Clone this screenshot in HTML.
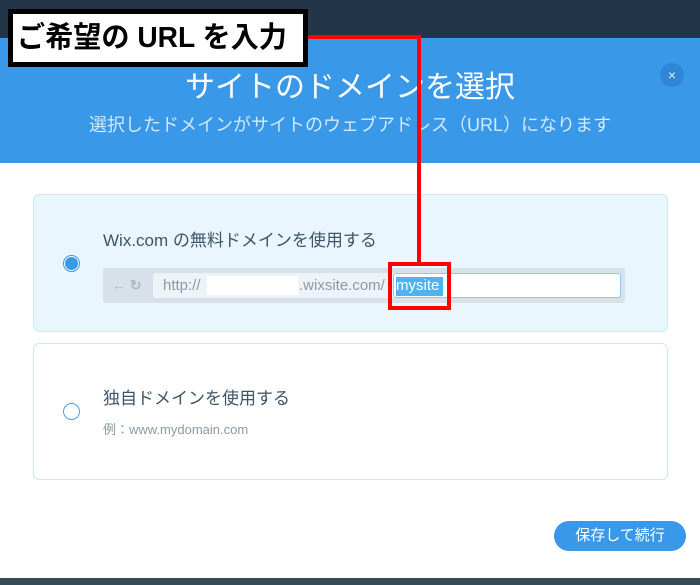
<!DOCTYPE html>
<html><head><meta charset="utf-8"><style>
*{margin:0;padding:0;box-sizing:border-box}
body{width:700px;height:585px;position:relative;overflow:hidden;background:#fff;font-family:"Liberation Sans","Noto Sans CJK JP",sans-serif}
.a{position:absolute}
</style></head><body>
<div class="a" style="left:0;top:0;width:700px;height:38px;background:#233549"></div>
<div class="a" style="left:0;top:38px;width:700px;height:125px;background:#3a98e9"></div>
<div class="a" style="left:0;top:70px;width:700px;text-align:center;color:#fff;font-size:30px;line-height:36px">サイトのドメインを選択</div>
<div class="a" style="left:0;top:114px;width:700px;text-align:center;color:#d2e8fb;font-size:18px;line-height:22px">選択したドメインがサイトのウェブアドレス（URL）になります</div>
<div class="a" style="left:660px;top:63px;width:24px;height:24px;border-radius:50%;background:#2f86d6;color:#dbeefc;font-size:14px;line-height:24px;text-align:center">×</div>

<div class="a" style="left:33px;top:194px;width:635px;height:138px;background:#eaf6fe;border:1px solid #cfe7f8;border-radius:6px"></div>
<div class="a" style="left:63px;top:255px;width:17px;height:17px;border-radius:50%;border:1px solid #3a98e9;background:#fff"></div>
<div class="a" style="left:65px;top:257px;width:13px;height:13px;border-radius:50%;background:#3a98e9"></div>
<div class="a" style="left:103px;top:230px;color:#3c5568;font-size:17px;line-height:22px">Wix.com の無料ドメインを使用する</div>
<div class="a" style="left:103px;top:268px;width:522px;height:35px;background:#d8e1e9;border-radius:3px"></div>
<div class="a" style="left:112px;top:276px;color:#aab8c4;font-size:14px;line-height:18px;font-weight:bold">← ↻</div>
<div class="a" style="left:153px;top:273px;width:467px;height:25px;background:#eef3f7;border-radius:3px"></div>
<div class="a" style="left:393px;top:273px;width:228px;height:25px;background:#fff;border:1px solid #8ccaf3;border-radius:3px"></div>
<div class="a" style="left:163px;top:277px;color:#8a9aa8;font-size:15px;line-height:18px">http://</div>
<div class="a" style="left:207px;top:276px;width:91px;height:19px;background:#fff"></div>
<div class="a" style="left:299px;top:277px;color:#8a9aa8;font-size:15px;line-height:18px">.wixsite.com/</div>
<div class="a" style="left:396px;top:277px;width:47px;height:19px;background:#4db3f4;color:#fff;font-size:15px;line-height:18px">mysite</div>

<div class="a" style="left:33px;top:343px;width:635px;height:137px;background:#fff;border:1px solid #cfe7f8;border-radius:6px"></div>
<div class="a" style="left:63px;top:403px;width:17px;height:17px;border-radius:50%;border:1.5px solid #4aa0ea"></div>
<div class="a" style="left:103px;top:388px;color:#3c5568;font-size:17px;line-height:22px">独自ドメインを使用する</div>
<div class="a" style="left:103px;top:422px;color:#8a9aa8;font-size:13px;line-height:16px">例：www.mydomain.com</div>

<div class="a" style="left:554px;top:521px;width:132px;height:30px;border-radius:15px;background:#3a98e9;color:#fff;font-size:15px;line-height:30px;text-align:center">保存して続行</div>
<div class="a" style="left:0;top:578px;width:700px;height:7px;background:#374a58"></div>

<div class="a" style="left:308px;top:35px;width:113px;height:4px;background:#f00"></div>
<div class="a" style="left:417px;top:35px;width:4px;height:228px;background:#f00"></div>
<div class="a" style="left:388px;top:262px;width:63px;height:48px;border:4px solid #f00"></div>
<div class="a" style="left:8px;top:9px;width:300px;height:58px;background:#fff;border:5px solid #000"></div>
<div class="a" style="left:17px;top:14px;color:#000;font-weight:bold;font-size:29px;line-height:48px;white-space:nowrap;transform:scaleX(0.97);transform-origin:left">ご希望の URL を入力</div>
</body></html>
